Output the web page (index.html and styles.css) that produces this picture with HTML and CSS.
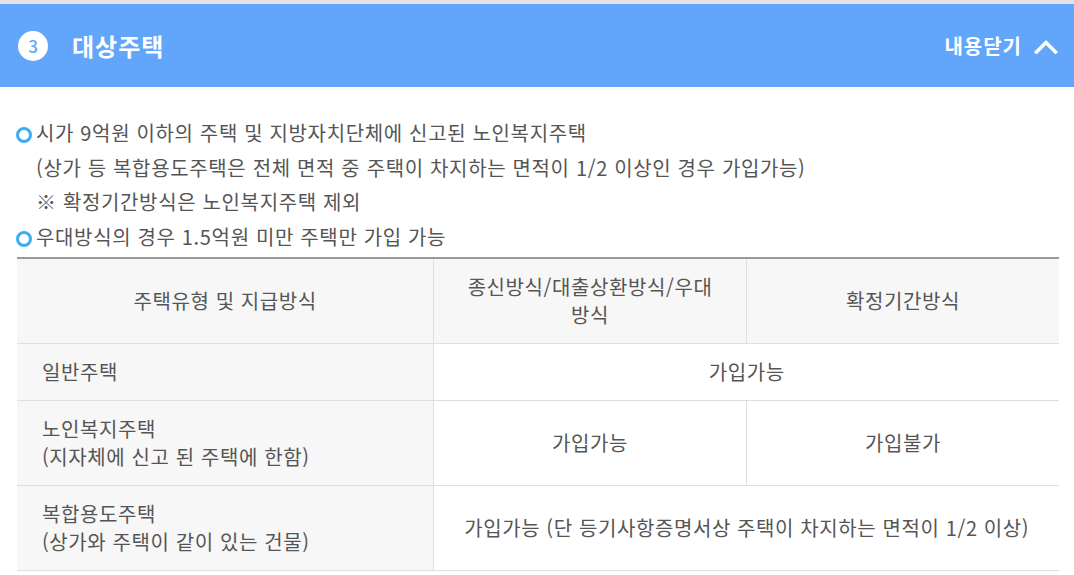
FILE: index.html
```html
<!DOCTYPE html>
<html lang="ko">
<head>
<meta charset="utf-8">
<link rel="stylesheet" href="styles.css">
</head>
<body>
<section class="panel">
  <header class="panel-head">
    <div class="head-left">
      <span class="num">3</span>
      <h2 class="title">대상주택</h2>
    </div>
    <button class="toggle">내용닫기
      <svg class="chev" width="24" height="16" viewBox="0 0 24 16"><path d="M2.5 14 L12 4.5 L21.5 14" fill="none" stroke="#fff" stroke-width="3.6" stroke-linecap="square"/></svg>
    </button>
  </header>
  <div class="panel-body">
    <ul class="bullets">
      <li class="item">시가 9억원 이하의 주택 및 지방자치단체에 신고된 노인복지주택<br>(상가 등 복합용도주택은 전체 면적 중 주택이 차지하는 면적이 1/2 이상인 경우 가입가능)<br>※ 확정기간방식은 노인복지주택 제외</li>
      <li class="item">우대방식의 경우 1.5억원 미만 주택만 가입 가능</li>
    </ul>
    <table class="tbl">
      <colgroup><col class="c1"><col class="c2"><col class="c3"></colgroup>
      <thead>
        <tr><th>주택유형 및 지급방식</th><th>종신방식/대출상환방식/우대방식</th><th>확정기간방식</th></tr>
      </thead>
      <tbody>
        <tr><td class="rh">일반주택</td><td colspan="2">가입가능</td></tr>
        <tr><td class="rh">노인복지주택<br>(지자체에 신고 된 주택에 한함)</td><td>가입가능</td><td>가입불가</td></tr>
        <tr><td class="rh">복합용도주택<br>(상가와 주택이 같이 있는 건물)</td><td colspan="2">가입가능 (단 등기사항증명서상 주택이 차지하는 면적이 1/2 이상)</td></tr>
      </tbody>
    </table>
  </div>
</section>
</body>
</html>
```
FILE: styles.css
```css
* { box-sizing: border-box; }
html, body { margin: 0; padding: 0; background: #fff; }
body { font-family: "Noto Sans CJK KR", "Noto Sans", sans-serif; color: #555; }
.panel { border-top: 4px solid #e2e2e2; }
.panel-head {
  height: 83px;
  background: #62a6fb;
  display: flex;
  align-items: center;
  justify-content: space-between;
  padding: 0 16px 0 18px;
}
.head-left { display: flex; align-items: center; }
.num {
  width: 30px; height: 30px; border-radius: 50%;
  background: #fff; color: #62a6fb;
  display: flex; align-items: center; justify-content: center;
  font-size: 17px; font-weight: 500;
}
.title { margin: 0 0 0 24px; color: #fff; font-size: 24px; font-weight: 700; letter-spacing: 1px; }
.toggle {
  border: 0; background: none; color: #fff; padding: 0;
  font-family: inherit; font-size: 20px; font-weight: 700; letter-spacing: 1px;
  display: flex; align-items: center; gap: 12px;
}
.chev { display: block; }
.panel-body { padding: 29px 15px 0 17px; }
.bullets { list-style: none; margin: 0 0 2px; padding: 0; }
.item {
  position: relative; padding-left: 19px;
  font-size: 20px; line-height: 34.7px; color: #555; letter-spacing: 0.65px;
}
.item::before {
  content: ""; position: absolute; left: -1px; top: 11px;
  width: 10px; height: 10px; border-radius: 50%;
  border: 3px solid #3aaef2;
}
.tbl {
  width: 100%; border-collapse: collapse; table-layout: fixed;
  border-top: 2px solid #999;
  font-size: 20px; line-height: 28px; color: #555; letter-spacing: 0.6px;
}
.c1 { width: 40%; }
.c2, .c3 { width: 30%; }
.tbl th, .tbl td {
  border: 1px solid #dedede; padding: 14px 15px; text-align: center; font-weight: 400;
}
.tbl tr > :first-child { border-left: 0; }
.tbl tr > :last-child { border-right: 0; }
.tbl th { background: #f7f7f7; padding: 14px 24px; }
.tbl td.rh { background: #f7f7f7; text-align: left; padding-left: 25px; }
```
